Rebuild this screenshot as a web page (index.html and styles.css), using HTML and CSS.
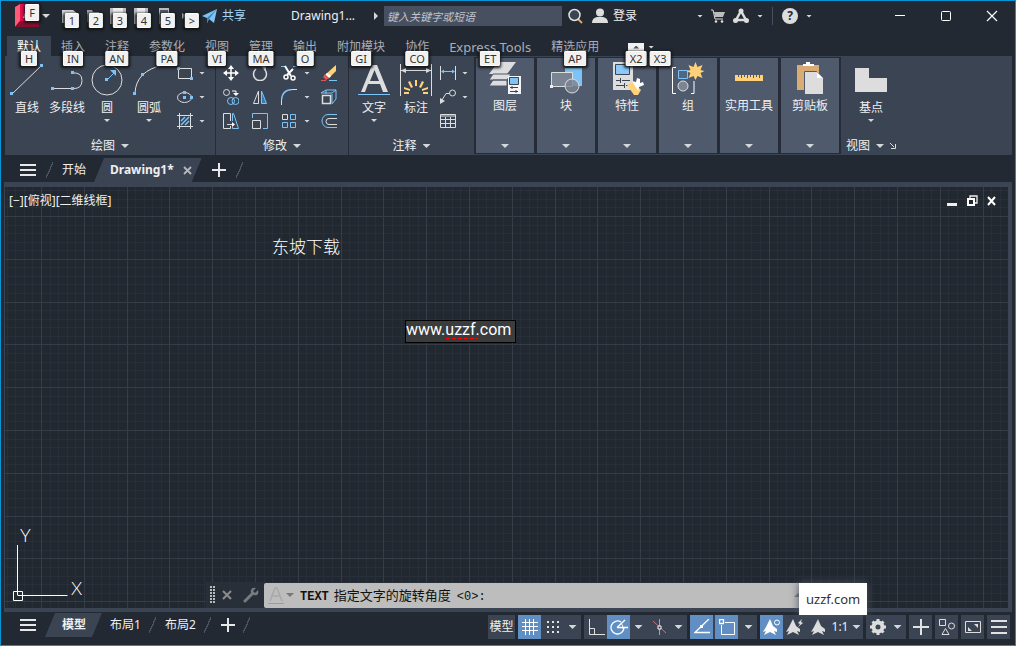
FILE: index.html
```html
<!DOCTYPE html>
<html lang="zh-CN">
<head>
  <meta charset="UTF-8">
  <meta name="viewport" content="width=device-width, initial-scale=1.0">
  <title>Drawing1</title>
  <link rel="stylesheet" href="styles.css">
</head>
<body>
<div class="app">

  <!-- Title bar -->
  <header class="titlebar">
    <button class="app-button" aria-label="应用程序菜单">
      <svg width="24" height="24" viewBox="0 0 24 24"><path d="M0 3L5 0V17L0 23z" fill="#ff5a78"/><path d="M5 0H24V18H5z" fill="#e51050"/><path d="M5 17H24V23H0z" fill="#8b0d2d"/><path d="M8 14L12 3h3l4 11h-3l-1-3h-3l-1 3z" fill="#fff"/></svg>
      <span class="keytip tip-f">F</span>
    </button>
    <i class="caret big app-caret"></i>
    <div class="quick">
      <button aria-label="新建"><svg width="16" height="16"><path d="M0 2h11l5 4v9H0z" fill="#d5d7da"/></svg><span class="keytip">1</span></button>
      <button aria-label="打开"><svg width="16" height="16"><path d="M1 14V2h5l1 2h6v3H5l-3 7z" fill="#9da1a7"/><path d="M5 7h11l-3 7H2z" fill="#d5d7da"/></svg><span class="keytip">2</span></button>
      <button aria-label="保存"><svg width="16" height="16"><path d="M0 0h16v16H0z" fill="#b9bcc0"/><path d="M3 0h10v6H3zM3 9h10v7H3z" fill="#eee"/><path d="M2 7h12v2H2z" fill="#39414d"/></svg><span class="keytip">3</span></button>
      <button aria-label="另存为"><svg width="16" height="16"><path d="M0 0h14v16H0z" fill="#b9bcc0"/><path d="M3 0h8v6H3zM3 9h8v7H3z" fill="#eee"/><path d="M2 7h10v2H2z" fill="#39414d"/></svg><span class="keytip">4</span></button>
      <button aria-label="移动设备"><svg width="16" height="16"><path d="M1 0h10v16H1z" fill="#b9bcc0"/><path d="M2 2h8v11H2z" fill="#555b64"/></svg><span class="keytip">5</span></button>
      <button aria-label="更多"><svg width="16" height="16"><path d="M0 5l4 3-4 3zM4 5l4 3-4 3z" fill="#d5d7da"/></svg><span class="keytip">&gt;</span></button>
    </div>
    <button class="share"><svg width="16" height="16"><path d="M0 8L15 1 12 15 7 11 5 15V10z" fill="#7cc4f8"/><path d="M5 10L15 1 7 11 5 15z" fill="#3c83b4"/></svg>共享</button>
    <span class="doc-name">Drawing1...</span>
    <i class="caret-right"></i>
    <input class="search" type="text" placeholder="键入关键字或短语" aria-label="搜索">
    <div class="account">
      <button aria-label="搜索"><svg width="16" height="16"><path d="M10 11l4 4" stroke="#dba765" stroke-width="2"/><circle cx="6.500" cy="7" r="5.500" fill="#3b4453" stroke="#e3e3e3" stroke-width="1.500"/></svg></button>
      <button class="login"><svg width="16" height="16"><circle cx="8" cy="4.500" r="4" fill="#ddd"/><path d="M0 15q0-5 5-6h6q5 1 5 6z" fill="#ddd"/></svg>登录</button>
    </div>
    <div class="services">
      <i class="caret"></i>
      <button aria-label="购物车"><svg width="14" height="16"><path d="M0 2h2l2 9h8" fill="none" stroke="#ddd"/><path d="M3 4h11l-2 5H4z" fill="#bdbdbd"/><circle cx="5" cy="13.500" r="1.300" fill="#ddd"/><circle cx="11" cy="13.500" r="1.300" fill="#ddd"/></svg></button>
      <button aria-label="应用"><svg width="16" height="16"><path d="M8 3L3 12M8 3l5 9M3 12h10" stroke="#ddd" stroke-width="2.500"/><circle cx="8" cy="3" r="2.500" fill="#ddd"/><circle cx="2.500" cy="12.500" r="2.500" fill="#ddd"/><circle cx="13.500" cy="12.500" r="2.500" fill="#ddd"/></svg></button>
      <i class="caret"></i>
      <span class="divider"></span>
      <button class="help" aria-label="帮助">?</button>
      <i class="caret"></i>
    </div>
    <div class="window-buttons">
      <button aria-label="最小化"><svg width="12" height="12"><path d="M1 5.500h10" stroke="#fff"/></svg></button>
      <button aria-label="最大化"><svg width="12" height="12"><rect x="1.500" y="1.500" width="9" height="9" rx="1" fill="none" stroke="#fff"/></svg></button>
      <button aria-label="关闭"><svg width="12" height="12"><path d="M1 1l10 10M11 1L1 11" stroke="#fff" stroke-width="1.200"/></svg></button>
    </div>
  </header>

  <!-- Ribbon tabs -->
  <nav class="ribbon-tabs">
    <button class="active">默认<span class="keytip">H</span></button>
    <button>插入<span class="keytip">IN</span></button>
    <button>注释<span class="keytip">AN</span></button>
    <button>参数化<span class="keytip">PA</span></button>
    <button>视图<span class="keytip">VI</span></button>
    <button>管理<span class="keytip">MA</span></button>
    <button>输出<span class="keytip">O</span></button>
    <button>附加模块<span class="keytip">GI</span></button>
    <button>协作<span class="keytip">CO</span></button>
    <button class="latin">Express Tools<span class="keytip">ET</span></button>
    <button>精选应用<span class="keytip">AP</span></button>
    <button class="minimize" aria-label="最小化功能区"><i class="caret up"></i><span class="keytip">X2</span></button>
    <button class="minimize-menu" aria-label="功能区选项"><i class="caret"></i><span class="keytip">X3</span></button>
  </nav>

  <!-- Ribbon -->
  <section class="ribbon">
    <div class="panel draw">
      <div class="tools">
        <button class="tool"><svg width="34" height="32"><path d="M2 30L31 2" stroke="#ddd"/><path d="M0 28h3v3H0zM30 0h3v3h-3z" fill="#7cc4f8"/></svg>直线</button>
        <button class="tool wide"><svg width="32" height="32"><path d="M1 24.500h22M21 9q10-1 10 7.500T22 24.500" fill="none" stroke="#ddd"/><path d="M0 23h3v3H0zM20 23h3v3h-3zM20 7h3v3h-3z" fill="#7cc4f8"/></svg>多段线</button>
        <button class="tool"><svg width="32" height="32"><circle cx="16" cy="16" r="15" fill="none" stroke="#ddd"/><path d="M16 16l8-8" stroke="#7cc4f8"/><path d="M14 14h3v3h-3zM25 6v6l-6-6z" fill="#7cc4f8"/></svg>圆<i class="caret"></i></button>
        <button class="tool arc"><svg width="32" height="32"><path d="M2 29Q3 7 30 1" fill="none" stroke="#ddd"/><path d="M0 28h3v3H0zM8 9h3v3H8z" fill="#7cc4f8"/></svg>圆弧<i class="caret"></i></button>
        <div class="small-tools">
          <button aria-label="矩形"><svg width="16" height="16"><path d="M1.500 3.500h13v10h-13z" fill="none" stroke="#ddd"/><path d="M0 2h3v3H0zM13 12h3v3h-3z" fill="#7cc4f8"/></svg></button><i class="caret"></i>
          <button aria-label="椭圆"><svg width="16" height="16"><ellipse cx="7.500" cy="8.500" rx="7" ry="5" fill="none" stroke="#ddd"/><path d="M6 2h3v3H6zM6 7h3v3H6zM13 7h3v3h-3z" fill="#7cc4f8"/></svg></button><i class="caret"></i>
          <button aria-label="图案填充"><svg width="16" height="16"><path d="M0 2.500h16M0 13.500h16M2.500 0v16M13.500 0v16" stroke="#ddd"/><path d="M4 8l4-4M4 12l8-8M8 12l4-4" stroke="#7cc4f8" stroke-width="1.500"/></svg></button><i class="caret"></i>
        </div>
      </div>
      <button class="panel-title">绘图<i class="caret big"></i></button>
    </div>

    <div class="panel modify">
      <div class="tools">
        <button aria-label="移动"><svg width="16" height="16"><path d="M8 2v12M2 8h12" stroke="#fff" stroke-width="1.500"/><path d="M8 0l3 4H5zM8 16l3-4H5zM0 8l4-3v6zM16 8l-4-3v6z" fill="#fff"/></svg></button>
        <button aria-label="旋转"><svg width="16" height="16"><path d="M12 4a6.500 6.500 0 1 1-8 0" fill="none" stroke="#ddd" stroke-width="1.500"/><path d="M9 1h5v5z" fill="#ddd"/></svg></button>
        <button aria-label="修剪"><svg width="16" height="16"><path d="M0 1.500h4M12 1.500h4" stroke="#7cc4f8"/><path d="M4 1l6 10M12 4L6 10" stroke="#fff" stroke-width="2"/><circle cx="5" cy="12" r="2" fill="none" stroke="#fff" stroke-width="1.500"/><circle cx="12" cy="13" r="2" fill="none" stroke="#fff" stroke-width="1.500"/></svg></button><i class="caret"></i>
        <button aria-label="删除"><svg width="16" height="16"><path d="M15 0v6l-7 7-3-4z" fill="#ffd27a"/><path d="M6 8l4 3-2 2-4-3z" fill="#fff"/><path d="M4 9l4 4-3 2-3-3z" fill="#ef5350"/><path d="M0 15.500h5" stroke="#ef5350"/><path d="M8 15.500h8" stroke="#7cc4f8"/></svg></button>

        <button aria-label="复制"><svg width="16" height="16"><circle cx="3.500" cy="3.500" r="3" fill="none" stroke="#ddd"/><path d="M9 2h4v4" fill="none" stroke="#fff"/><path d="M10 4h6l-3 3z" fill="#fff"/><circle cx="8" cy="12" r="3.500" fill="none" stroke="#7cc4f8"/><circle cx="12.500" cy="12" r="3.500" fill="none" stroke="#7cc4f8"/></svg></button>
        <button aria-label="镜像"><svg width="16" height="16"><path d="M6.500 2v12.500h-5z" fill="none" stroke="#ddd"/><path d="M9.500 2v12.500h5z" fill="#357bab" stroke="#7cc4f8"/></svg></button>
        <button aria-label="圆角"><svg width="16" height="16"><path d="M.5 16v-6M10 .5h6" stroke="#ddd"/><path d="M.5 11Q1 1 11 .5" fill="none" stroke="#7cc4f8" stroke-width="1.500"/></svg></button><i class="caret"></i>
        <button aria-label="分解"><svg width="16" height="16"><path d="M1.500 6.500h8v8h-8z" fill="none" stroke="#ddd" stroke-width="1.500"/><path d="M0 4l5-3h10v9l-4 5M11 5v9M5 1v4M0 4h11l4-3" fill="none" stroke="#7cc4f8"/></svg></button>

        <button aria-label="拉伸"><svg width="16" height="16"><path d="M7.500 8V.5h-7v15h7V13M4 11.500h7" fill="none" stroke="#ddd"/><path d="M9 9l3 2.500L9 14z" fill="#fff"/><path d="M9.500 8V.5h1l5 15h-6V14" fill="none" stroke="#7cc4f8"/></svg></button>
        <button aria-label="缩放"><svg width="16" height="16"><path d="M.5 5V.5h15v15H11" fill="none" stroke="#7cc4f8"/><path d="M.5 7.500h8v8h-8z" fill="none" stroke="#ddd"/></svg></button>
        <button aria-label="阵列"><svg width="16" height="16"><path d="M1.500 1.500h5v5h-5z" fill="none" stroke="#ddd"/><path d="M9.500 1.500h5v5h-5zM1.500 9.500h5v5h-5zM9.500 9.500h5v5h-5z" fill="none" stroke="#7cc4f8"/></svg></button><i class="caret"></i>
        <button aria-label="偏移"><svg width="16" height="16"><path d="M16 1.500H7a6 6.500 0 0 0 0 13h9" fill="none" stroke="#7cc4f8"/><path d="M16 5.500H8a3 3 0 0 0 0 6h8" fill="none" stroke="#ddd"/></svg></button>
      </div>
      <button class="panel-title">修改<i class="caret big"></i></button>
    </div>

    <div class="panel annotate">
      <div class="tools">
        <button class="tool"><svg width="32" height="32"><path d="M3 28L14 1h5l11 27h-5l-3-8H10l-3 8zM12 17h9L16.500 6z" fill="#ddd"/><path d="M0 30.500h32" stroke="#7cc4f8"/></svg>文字<i class="caret"></i></button>
        <button class="tool"><svg width="32" height="32"><path d="M.5 0v32M31.500 0v32M1 6.500h30" stroke="#ddd"/><path d="M1 6.500l5-2.500v5zM31 6.500L26 4v5z" fill="#ddd"/><path d="M15 16h2v6h-2zM8 18l2-1 3 6-2 1zM24 18l-2-1-3 6 2 1zM4 23l6 2v2l-6-2zM28 23l-6 2v2l6-2zM4 28h5v2H4zM23 28h5v2h-5z" fill="#ffd27a"/></svg>标注</button>
        <div class="small-tools">
          <button aria-label="线性标注"><svg width="16" height="16"><path d="M.5 1v14M15.500 1v14" stroke="#ddd"/><path d="M2 6.500h12" stroke="#7cc4f8"/><path d="M1 6.500l3-2v4zM15 6.500l-3-2v4z" fill="#7cc4f8"/></svg></button><i class="caret"></i>
          <button aria-label="引线"><svg width="16" height="16"><circle cx="12.500" cy="4" r="3" fill="none" stroke="#ddd"/><path d="M9 4.500H6L2 11" fill="none" stroke="#ddd"/><path d="M0 15v-6l5 3z" fill="#ddd"/></svg></button><i class="caret"></i>
          <button aria-label="表格"><svg width="16" height="16"><path d="M.5 1.500h15v13H.5zM0 3h16M0 6.500h16M0 10.500h16M5.500 4v10M10.500 4v10" fill="none" stroke="#ddd"/></svg></button>
        </div>
      </div>
      <button class="panel-title">注释<i class="caret big"></i></button>
    </div>

    <div class="collapsed">
      <button><svg width="34" height="34"><path d="M10 0h18l-9 12H1z" fill="#ddd"/><path d="M5 12L1 18h18l4-6zM5 18l-4 6h18v-6z" fill="#ddd" stroke="#4f5a6d"/><path d="M20 14h13v18H20z" fill="#f4f4f4"/><path d="M21.500 15.500h9v7h-9z" fill="#7cc4f8" stroke="#3b4453"/><path d="M22 25.500h8M22 29.500h8M24 24v3M28 28v3" stroke="#3b4453"/></svg>图层<i class="caret big"></i></button>
      <button><svg width="34" height="34"><path d="M16 6h17v18H16z" fill="#7cc4f8"/><path d="M2.500 10.500h21v14h-21z" fill="#7b8492" stroke="#ddd"/><circle cx="23" cy="24" r="7" fill="#7b8492" fill-opacity=".8" stroke="#ddd"/><path d="M1 23h3v3H1z" fill="#eee"/></svg>块<i class="caret big"></i></button>
      <button><svg width="34" height="34"><path d="M3 0h20v28H3z" fill="#ddd"/><path d="M5.500 2.500h14v10h-14z" fill="#8ac9f8" stroke="#3b4453"/><path d="M6 18.500h4M12 18.500h8M6 23.500h8M16 23.500h4M10.500 16v5M14.500 21v5" stroke="#3b4453"/><path d="M17 23l6-3 8 8-3 5h-4z" fill="#ffd27a"/><path d="M22 19l4 1 1-4 3 1v4l3-1 1 3-5 2-1 4z" fill="#fff"/></svg>特性<i class="caret big"></i></button>
      <button><svg width="34" height="34"><path d="M5 5.500H1.500v26H5M20 31.500h3V19" fill="none" stroke="#fff"/><path d="M7.500 8.500h9v8h-9z" fill="#52677f" stroke="#7cc4f8"/><circle cx="12" cy="24" r="5" fill="#7b8492" stroke="#ddd"/><path d="M24.500 0l2 5 5-2-2 5 4 1-4 2 2 5-5-2-2 4-2-4-5 2 2-5-4-2 4-1-2-5 5 2z" fill="#ffd27a"/></svg>组<i class="caret big"></i></button>
      <button><svg width="34" height="34"><path d="M3 13h28v6H3z" fill="#ffd27a"/><path d="M6.500 13v2M9.500 13v3M12.500 13v2M15.500 13v3M18.500 13v2M21.500 13v3M24.500 13v2M27.500 13v3" stroke="#4f5a6d"/></svg>实用工具<i class="caret big"></i></button>
      <button><svg width="34" height="34"><path d="M4 3h22v25H4z" fill="#d8ac72"/><path d="M10 4V2h3V0h4v2h4v2z" fill="#fff"/><path d="M11.500 9.500h12l7 7v16h-19z" fill="#ddd" stroke="#4f5a6d"/><path d="M24 10v6h6z" fill="#fff"/></svg>剪贴板<i class="caret big"></i></button>
    </div>

    <div class="panel view">
      <div class="tools">
        <button class="tool"><svg width="32" height="32"><path d="M0 4h14v10h18v14H0z" fill="#ddd"/></svg>基点<i class="caret"></i></button>
      </div>
      <button class="panel-title">视图<i class="caret big"></i><svg width="6" height="6"><path d="M0 0l4 4" stroke="#ddd"/><path d="M1 5.500h4.500V1" fill="none" stroke="#ddd"/></svg></button>
    </div>
  </section>

  <!-- File tabs -->
  <nav class="tab-strip file-tabs">
    <button class="menu" aria-label="菜单"><svg width="16" height="14"><path d="M0 2h16M0 7h16M0 12h16" stroke="#e8e8e8" stroke-width="2"/></svg></button>
    <i class="slash"></i>
    <button class="start">开始</button>
    <div class="tab active"><button>Drawing1*</button><button class="close" aria-label="关闭图形"><svg width="9" height="9"><path d="M1 1l7 7M8 1L1 8" stroke="#b4b8be" stroke-width="1.800"/></svg></button></div>
    <button class="add" aria-label="新图形"><svg width="14" height="14"><path d="M7 0v14M0 7h14" stroke="#e8e8e8" stroke-width="2"/></svg></button>
    <i class="slash"></i>
  </nav>

  <!-- Drawing area -->
  <main class="canvas">
    <svg class="grid" width="100%" height="100%" aria-hidden="true">
      <defs>
        <pattern id="grid" x="36" y="29" width="214" height="214" patternUnits="userSpaceOnUse">
          <path class="minor" d="M9.500 0v214M17.500 0v214M26.500 0v214M34.500 0v214M51.500 0v214M60.500 0v214M68.500 0v214M77.500 0v214M94.500 0v214M103.500 0v214M111.500 0v214M120.500 0v214M137.500 0v214M146.500 0v214M154.500 0v214M163.500 0v214M180.500 0v214M188.500 0v214M197.500 0v214M205.500 0v214"/>
          <path class="minor" d="M0 9.500h214M0 17.500h214M0 26.500h214M0 34.500h214M0 51.500h214M0 60.500h214M0 68.500h214M0 77.500h214M0 94.500h214M0 103.500h214M0 111.500h214M0 120.500h214M0 137.500h214M0 146.500h214M0 154.500h214M0 163.500h214M0 180.500h214M0 188.500h214M0 197.500h214M0 205.500h214"/>
          <path class="major" d="M.5 0v214M43.500 0v214M86.500 0v214M128.500 0v214M171.500 0v214M0 .5h214M0 43.500h214M0 86.500h214M0 128.500h214M0 171.500h214"/>
        </pattern>
      </defs>
      <rect width="100%" height="100%" fill="url(#grid)"/>
    </svg>

    <div class="viewport-bar">
      <div class="viewport-labels"><button>[−]</button><button>[俯视]</button><button>[二维线框]</button></div>
      <div class="viewport-buttons">
        <button aria-label="最小化"><svg width="12" height="12"><path d="M1 8h10v3H1z" fill="#eee"/></svg></button>
        <button aria-label="还原"><svg width="12" height="12"><path d="M4 3V1h7v7H9" fill="none" stroke="#eee" stroke-width="1.300"/><path d="M2 4h6v6H2z" fill="none" stroke="#fff" stroke-width="2"/></svg></button>
        <button aria-label="关闭"><svg width="12" height="12"><path d="M2 2l7 8M9 2l-7 8" stroke="#fff" stroke-width="2"/></svg></button>
      </div>
    </div>

    <span class="drawn-text">东坡下载</span>
    <div class="text-editor">
      <input type="text" value="www.uzzf.com" aria-label="文字" spellcheck="false">
      <i class="spell"></i>
    </div>

    <svg class="ucs" width="76" height="84">
      <path d="M6.500 23v50M6.500 73.500h50M2.500 69.500h9v9h-9z" fill="none" stroke="#fff"/>
      <text x="9" y="20">Y</text><text x="60" y="73">X</text>
    </svg>

    <div class="command">
      <svg class="grip" width="6" height="18"><path d="M1 0v18M4 0v18" stroke="#bbb" stroke-width="2" stroke-dasharray="2 1"/></svg>
      <button aria-label="关闭命令行"><svg width="10" height="10"><path d="M1 1l8 8M9 1L1 9" stroke="#8a8d91" stroke-width="2"/></svg></button>
      <button class="wrench" aria-label="自定义"><svg width="16" height="16"><path d="M2 14l7-7" stroke="#777a7e" stroke-width="3" stroke-linecap="round"/><path d="M15 3l-3 3-2-2 3-3q-4-1-5 2-1 3 1 4 2 2 5 1 2-1 1-5z" fill="#777a7e"/></svg></button>
      <div class="command-line">
        <svg width="16" height="18"><path d="M2 15L7 2h2l5 13M4 10h8" fill="none" stroke="#a7a9aa" stroke-width="1.500"/><path d="M0 17.500h16" stroke="#7fa5b8"/></svg>
        <i class="caret big"></i>
        <p><b>TEXT</b><span>指定文字的旋转角度</span>&lt;0&gt;:</p>
        <i class="caret up big"></i>
      </div>
    </div>
  </main>
  <div class="site-tip">uzzf.com</div>

  <!-- Layout tabs and status bar -->
  <footer class="bottom">
    <nav class="tab-strip">
      <button class="menu" aria-label="布局菜单"><svg width="16" height="14"><path d="M0 2h16M0 7h16M0 12h16" stroke="#e8e8e8" stroke-width="2"/></svg></button>
      <div class="tab active model"><button>模型</button></div>
      <button class="layout">布局1</button><i class="slash"></i>
      <button class="layout second">布局2</button><i class="slash"></i>
      <button class="add" aria-label="新建布局"><svg width="14" height="14"><path d="M7 0v14M0 7h14" stroke="#e8e8e8" stroke-width="2"/></svg></button>
      <i class="slash"></i>
    </nav>
    <div class="status">
      <div class="group"><button class="text">模型</button></div>
      <div class="group">
        <button class="on" aria-label="栅格"><svg width="16" height="16"><path d="M3.500 0v16M7.500 0v16M11.500 0v16M0 3.500h16M0 7.500h16M0 11.500h16" stroke="#fff"/></svg></button>
        <button aria-label="捕捉"><svg width="14" height="14"><path d="M1 2h14M1 7h14M1 12h14" stroke="#e2e2e2" stroke-width="2" stroke-dasharray="2 3"/></svg></button>
        <button class="drop" aria-label="捕捉设置"><i class="caret big"></i></button>
      </div>
      <div class="group">
        <button aria-label="正交"><svg width="18" height="16"><path d="M2.500 0v15.500H18M2.500 9.500h5v6" fill="none" stroke="#e2e2e2"/></svg></button>
        <button class="on" aria-label="极轴"><svg width="18" height="16"><path d="M11 3a6.500 6.500 0 1 0 3 6M7 8.500h11M7 8.500L15 1" fill="none" stroke="#fff" stroke-width="1.300"/><path d="M11 4q2 2 2 6" fill="none" stroke="#fff"/></svg></button>
        <button class="drop" aria-label="极轴设置"><i class="caret big"></i></button>
        <button aria-label="等轴测"><svg width="14" height="16"><path d="M7.500 0v16" stroke="#5fce7f"/><path d="M1 2l13 12" stroke="#d96c6c"/><path d="M6 7h3v3H6z" fill="#333" stroke="#fff"/></svg></button>
        <button class="drop" aria-label="等轴测设置"><i class="caret big"></i></button>
      </div>
      <div class="group spaced">
        <button class="on" aria-label="对象捕捉追踪"><svg width="16" height="16"><path d="M15 0L1 13.500h15" fill="none" stroke="#fff" stroke-width="1.300"/><path d="M6 6h3v3H6z" fill="#fff"/></svg></button>
        <button class="on" aria-label="对象捕捉"><svg width="16" height="16"><path d="M6 3.500h9.500v12h-13V6" fill="none" stroke="#fff"/><path d="M.5.5h4v4h-4z" fill="none" stroke="#fff" stroke-width="1.300"/></svg></button>
        <button class="drop" aria-label="对象捕捉设置"><i class="caret big"></i></button>
      </div>
      <div class="group">
        <button class="on" aria-label="注释可见性"><svg width="18" height="16"><path d="M7 0l3 7 4 3v3l-3-1 2 4-6-3-6 3 2-4-3 1 3-5z" fill="#fff"/><circle cx="14" cy="3.500" r="2.500" fill="#628fc3" stroke="#fff"/></svg></button>
        <button aria-label="自动缩放"><svg width="18" height="16"><path d="M7 0l3 7 4 3v3l-3-1 2 4-6-3-6 3 2-4-3 1 3-5z" fill="#ddd"/><path d="M16 0l-4 4 2 1-2 3 5-4-2-1z" fill="#ddd"/></svg></button>
        <button aria-label="注释比例"><svg width="14" height="16"><path d="M7 0l3 7 4 3v3l-3-1 2 4-6-3-6 3 2-4-3 1 3-5z" fill="#ddd"/></svg></button>
        <button class="scale">1:1<i class="caret big"></i></button>
      </div>
      <div class="group">
        <button aria-label="切换工作空间"><svg width="16" height="16"><circle cx="8" cy="8" r="4.500" fill="none" stroke="#ddd" stroke-width="4"/><path d="M8 0v3M8 13v3M0 8h3M13 8h3M2.500 2.500l2 2M11.500 11.500l2 2M2.500 13.500l2-2M11.500 4.500l2-2" stroke="#ddd" stroke-width="3"/></svg></button>
        <button class="drop" aria-label="工作空间菜单"><i class="caret big"></i></button>
      </div>
      <div class="group"><button aria-label="注释监视器"><svg width="16" height="16"><path d="M8 0v16M0 8h16" stroke="#e2e2e2" stroke-width="2"/></svg></button></div>
      <div class="group"><button aria-label="隔离对象"><svg width="18" height="16"><path d="M1.500.5h6v6h-6zM7.500 9.500l3.500 6H4z" fill="none" stroke="#ddd"/><circle cx="13.500" cy="7" r="3" fill="none" stroke="#ddd"/></svg></button></div>
      <div class="group"><button aria-label="全屏显示"><svg width="18" height="16"><path d="M1.500 2.500h15v11h-15z" fill="none" stroke="#ddd"/><path d="M10 5h4v4zM4 8v4h4z" fill="#ddd"/></svg></button></div>
      <div class="group"><button aria-label="自定义"><svg width="16" height="16"><path d="M0 2h16M0 8h16M0 14h16" stroke="#e2e2e2" stroke-width="2"/></svg></button></div>
    </div>
  </footer>
</div>
</body>
</html>
```

FILE: styles.css
```css
* {
    box-sizing: border-box;
}

body {
    margin: 0;
    background: #222933;
    color: #f0f0f0;
    font-family: "Noto Sans", "Noto Sans CJK SC", sans-serif;
    font-size: 12px;
    line-height: 16px;
}

button {
    display: flex;
    align-items: center;
    justify-content: center;
    margin: 0;
    padding: 0;
    border: 0;
    background: none;
    color: inherit;
    font: inherit;
    white-space: nowrap;
}

svg {
    display: block;
    flex: none;
}

.app {
    position: relative;
    display: flex;
    flex-direction: column;
    height: 100vh;
    border: 1px solid #0696d7;
    overflow: hidden;
}

/* Small triangles */

.caret {
    flex: none;
    width: 6px;
    height: 3px;
    background: #d5d7da;
    clip-path: polygon(0 0, 100% 0, 50% 100%);
}

.caret.big {
    width: 8px;
    height: 4px;
}

.caret.up {
    clip-path: polygon(50% 0, 100% 100%, 0 100%);
}

.caret-right {
    flex: none;
    width: 4px;
    height: 8px;
    background: #d5d7da;
    clip-path: polygon(0 0, 100% 50%, 0 100%);
}

.keytip {
    position: absolute;
    z-index: 2;
    top: 15px;
    left: 50%;
    transform: translateX(-50%);
    padding: 0 3px;
    border: 1px solid #fff;
    border-radius: 1px;
    background: #f1f1f1;
    box-shadow: 0 1px 3px 1px #111;
    color: #333;
    font-size: 11px;
    line-height: 13px;
}

/* Title bar */

.titlebar {
    display: flex;
    align-items: center;
    flex: none;
    height: 30px;
    padding-left: 14px;
}

.app-button,
.quick button {
    position: relative;
}

.app-caret {
    margin: 0 12px 0 3px;
}

.keytip.tip-f {
    top: 0;
    left: 17px;
    line-height: 15px;
}

.quick {
    display: flex;
    gap: 8px;
}

.quick .keytip {
    top: 5px;
    left: 10px;
}

.share {
    gap: 4px;
    margin-left: 4px;
    color: #a6d4f5;
}

.doc-name {
    width: 83px;
    margin-left: 45px;
    white-space: nowrap;
}

.search {
    flex: 0 1 178px;
    min-width: 60px;
    height: 20px;
    margin-left: 6px;
    padding: 0 3px;
    border: 0;
    background: #465061;
    color: #fff;
    font: italic 11px "Noto Sans", "Noto Sans CJK SC", sans-serif;
}

.search::placeholder {
    color: #c0c5cc;
    opacity: 1;
}

.account {
    display: flex;
    gap: 8px;
    margin-left: 6px;
}

.login {
    gap: 5px;
}

.services {
    display: flex;
    align-items: center;
    gap: 8px;
    margin-left: 60px;
}

.divider {
    width: 1px;
    height: 18px;
    margin: 0 1px;
    background: #465061;
}

.help {
    width: 16px;
    height: 16px;
    border-radius: 50%;
    background: #ddd;
    color: #222933;
    font-weight: bold;
}

.window-buttons {
    display: flex;
    margin-left: auto;
}

.window-buttons button {
    width: 46px;
    height: 30px;
}

/* Ribbon tabs */

.ribbon-tabs {
    display: flex;
    flex: none;
    height: 20px;
    margin-top: 5px;
    padding-left: 6px;
    color: #a9aeb6;
}

.ribbon-tabs button {
    position: relative;
    padding: 1px 10px 0;
}

.ribbon-tabs .active {
    background: #3b4453;
    color: #fff;
}

.ribbon-tabs .latin {
    font-size: 13px;
}

.ribbon-tabs .minimize {
    align-self: center;
    width: 16px;
    height: 8px;
    margin: 2px 0 0 19px;
    padding: 0;
    background: #f1f1f1;
}

.minimize .caret {
    background: #555;
}

.ribbon-tabs .minimize-menu {
    width: 6px;
    margin-left: 4px;
    padding: 2px 0 0;
}

.minimize .keytip {
    top: 8px;
}

.minimize-menu .keytip {
    left: 12px;
}

/* Ribbon */

.ribbon {
    display: flex;
    flex: none;
    height: 99px;
    margin: 0 3px 0 4px;
    background: #3b4453;
}

.panel {
    display: flex;
    flex-direction: column;
    padding-top: 5px;
    border-right: 1px solid #252c37;
}

.panel .tools {
    display: flex;
    flex: 1;
}

.panel-title {
    gap: 6px;
    height: 18px;
}

.tool {
    flex-direction: column;
    justify-content: flex-start;
    width: 34px;
    padding-top: 3px;
}

.tool svg {
    margin-bottom: 4px;
}

.tool .caret {
    margin-top: 3px;
}

.small-tools {
    display: grid;
    grid-template-columns: 22px 12px;
    grid-template-rows: repeat(3, 24px);
    align-items: center;
    justify-items: center;
}

.draw {
    width: 211px;
}

.draw .tools {
    padding-left: 5px;
}

.draw .wide {
    width: 46px;
}

.draw .arc {
    width: 50px;
}

.modify {
    width: 133px;
}

.modify .tools {
    display: grid;
    grid-template-columns: 29px 29px 29px 8px 36px;
    grid-template-rows: repeat(3, 24px);
    align-items: center;
    justify-items: center;
}

.annotate {
    width: 125px;
    border-right: 0;
}

.annotate .tools {
    padding-left: 4px;
}

.annotate .tool {
    width: 42px;
}

.collapsed {
    display: flex;
    gap: 3px;
    margin: 1px 0;
    padding: 1px 2px;
    background: #252c37;
}

.collapsed button {
    flex-direction: column;
    justify-content: flex-start;
    width: 58px;
    padding: 4px 0 5px;
    background: #4f5a6d;
}

.collapsed svg {
    margin-bottom: 2px;
}

.collapsed .caret {
    margin-top: auto;
}

.view {
    width: 60px;
    border-right: 0;
}

.view .tool {
    width: 60px;
}

/* Drawing tabs and layout tabs */

.tab-strip {
    display: flex;
    align-items: center;
    flex: none;
    height: 24px;
    padding-left: 19px;
}

.file-tabs {
    margin-top: 3px;
}

.slash {
    flex: none;
    width: 7px;
    height: 16px;
    background: linear-gradient(114deg, transparent 46%, #4a5361 46%, #4a5361 56%, transparent 56%);
}

.tab {
    display: flex;
    align-items: center;
    height: 24px;
    padding: 0 10px 0 16px;
    font-weight: bold;
}

.tab.active {
    background: #3b4453;
    clip-path: polygon(10px 0, 100% 0, calc(100% - 10px) 100%, 0 100%);
}

.close {
    margin-left: 9px;
}

.file-tabs .slash {
    margin: 0 9px 0 10px;
}

.start {
    margin-right: 8px;
}

.add {
    margin-left: 10px;
}

/* Drawing area */

.canvas {
    position: relative;
    display: flex;
    flex: 1;
    flex-direction: column;
    min-height: 0;
    margin: 0 3px 0 3px;
    border: solid #3b4453;
    border-width: 5px 4px 4px 1px;
    background: #22282f;
}

.grid {
    position: absolute;
    inset: 0;
}

.grid .minor {
    fill: none;
    stroke: #282f3a;
}

.grid .major {
    fill: none;
    stroke: #363d49;
}

.viewport-bar {
    position: relative;
    display: flex;
    justify-content: space-between;
    padding: 6px 10px 0 4px;
}

.viewport-labels,
.viewport-buttons {
    display: flex;
}

.viewport-buttons {
    gap: 8px;
}

.drawn-text {
    position: absolute;
    top: 47px;
    left: 267px;
    color: #fff;
    font: 300 17px/24px "Noto Sans CJK SC", sans-serif;
}

.text-editor {
    position: absolute;
    top: 133px;
    left: 400px;
}

.text-editor input {
    display: block;
    width: 111px;
    height: 23px;
    padding: 0 0 5px;
    border: 1px solid #000;
    background: #3a3c3e;
    color: #fff;
    font: 16px Roboto, sans-serif;
}

.spell {
    position: absolute;
    top: 18px;
    left: 41px;
    width: 32px;
    height: 1px;
    background: repeating-linear-gradient(90deg, #f00 0 4px, transparent 4px 6px);
}

.ucs {
    position: absolute;
    bottom: 2px;
    left: 6px;
}

.ucs text {
    fill: #fff;
    font: 300 18px Lato, sans-serif;
}

.command {
    position: relative;
    display: flex;
    align-items: center;
    width: 604px;
    max-width: 100%;
    height: 26px;
    margin-top: auto;
    margin-left: 201px;
    padding-left: 4px;
    background: #292f38;
}

.command button {
    margin-left: 6px;
}

.command .wrench {
    margin-left: 11px;
}

.command-line {
    display: flex;
    align-items: center;
    flex: 1;
    height: 25px;
    margin-left: 5px;
    padding: 0 8px 0 4px;
    border-radius: 2px;
    background: #bdbdbd;
    color: #111;
    font-family: "Liberation Mono", "Noto Sans CJK SC", monospace;
}

.command-line .caret {
    margin-left: 2px;
    background: #777;
}

.command-line p {
    margin: 0 auto 0 6px;
    padding-top: 3px;
}

.command-line span {
    margin: 0 6px 0 5px;
    font-size: 13px;
}

.site-tip {
    position: absolute;
    z-index: 3;
    bottom: 30px;
    left: 798px;
    padding: 8px 7px;
    background: #fff;
    box-shadow: 0 0 8px #4a5361;
    color: #333;
    font-size: 13px;
}

/* Bottom bar */

.bottom {
    display: flex;
    justify-content: space-between;
    flex: none;
    height: 33px;
    padding: 1px 5px 0 0;
}

.bottom .menu {
    margin-right: 9px;
}

.bottom .model {
    width: 57px;
    margin-right: 8px;
    padding-left: 17px;
}

.bottom .slash {
    margin-left: 8px;
}

.bottom .second {
    margin-left: 9px;
}

.status {
    display: flex;
    gap: 3px;
    padding-top: 2px;
}

.group {
    display: flex;
    height: 24px;
    background: #3b4453;
}

.group.spaced {
    gap: 2px;
}

.group button {
    width: 23px;
}

.group .text {
    width: 27px;
}

.group .drop {
    width: 17px;
}

.group .scale {
    gap: 4px;
    width: 34px;
}

.group .on {
    background: #628fc3;
}
```
